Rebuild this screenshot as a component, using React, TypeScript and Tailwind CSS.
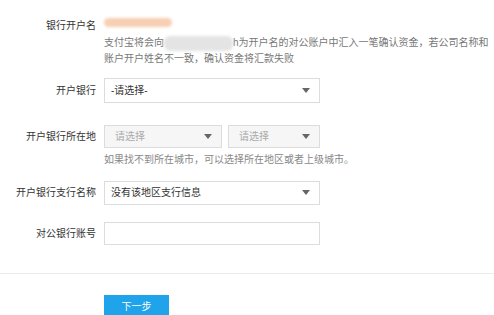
import React from "react";

function Arrow() {
  return (
    <span className="w-0 h-0 border-l-[4px] border-r-[4px] border-t-[5px] border-l-transparent border-r-transparent border-t-[#666]" />
  );
}

function Select({
  text,
  className,
  textClass,
}: {
  text: string;
  className: string;
  textClass: string;
}) {
  return (
    <div className={`flex items-center justify-between border border-[#dcdcdc] pr-[9px] ${className}`}>
      <span className={textClass}>{text}</span>
      <Arrow />
    </div>
  );
}

function Label({ children }: { children: React.ReactNode }) {
  return <div className="w-[96px] shrink-0 text-right text-[#333]">{children}</div>;
}

export default function App() {
  return (
    <div
      className="w-[494px] h-[315px] bg-white overflow-hidden text-[10px] leading-[15px]"
      style={{ fontFamily: '"Liberation Sans", "Noto Sans CJK SC", sans-serif' }}
    >
      <div className="pt-[18px] flex gap-2">
        <Label>银行开户名</Label>
        <div className="flex-1">
          <div className="w-[68px] h-[9px] rounded-full bg-[#f7cfb2] blur-[1.5px]" />
          <p className="mt-[8px] text-[#777] whitespace-nowrap">
            支付宝将会向
            <span className="inline-block align-middle w-[69px] h-[15px] rounded-md bg-[#e4e4e4] blur-[1.5px]" />
            h为开户名的对公账户中汇入一笔确认资金，若公司名称和
            <br />
            账户开户姓名不一致，确认资金将汇款失败
          </p>
        </div>
      </div>

      <div className="mt-[12px] flex items-center gap-2">
        <Label>开户银行</Label>
        <Select
          text="-请选择-"
          className="w-[216px] h-[25px] bg-white pl-[6px]"
          textClass="text-[#333]"
        />
      </div>

      <div className="mt-[22px] flex items-center gap-2">
        <Label>开户银行所在地</Label>
        <div className="flex gap-[6px]">
          <Select
            text="请选择"
            className="w-[118px] h-[23px] bg-[#f6f6f6] pl-[10px]"
            textClass="text-[#aaa]"
          />
          <Select
            text="请选择"
            className="w-[92px] h-[23px] bg-[#f6f6f6] pl-[10px]"
            textClass="text-[#aaa]"
          />
        </div>
      </div>
      <p className="mt-[4px] pl-[104px] text-[#888]">如果找不到所在城市，可以选择所在地区或者上级城市。</p>

      <div className="mt-[14px] flex items-center gap-2">
        <Label>开户银行支行名称</Label>
        <Select
          text="没有该地区支行信息"
          className="w-[216px] h-[24px] bg-white pl-[6px]"
          textClass="text-[#333]"
        />
      </div>

      <div className="mt-[17px] flex items-center gap-2">
        <Label>对公银行账号</Label>
        <div className="w-[216px] h-[23px] border border-[#dcdcdc] bg-white" />
      </div>

      <div className="mt-[28px] border-t border-[#ececec]" />

      <div className="mt-[21px] pl-[104px]">
        <button className="w-[65px] h-[24px] bg-[#1fa3ea] text-white text-[10px]">下一步</button>
      </div>
    </div>
  );
}
